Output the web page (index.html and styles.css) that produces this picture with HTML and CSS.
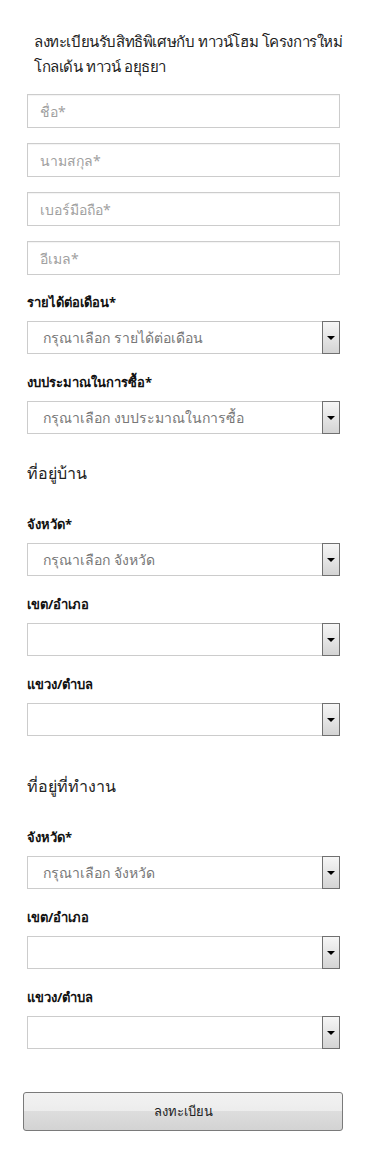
FILE: index.html
```html
<!DOCTYPE html>
<html lang="th">
  <head>
    <meta charset="UTF-8" />
    <title>ลงทะเบียน</title>
    <link rel="stylesheet" href="styles.css">
  </head>
  <body>
    <div class="container">
      <h1 class="title">ลงทะเบียนรับสิทธิพิเศษกับ ทาวน์โฮม โครงการใหม่ โกลเด้น ทาวน์ อยุธยา</h1>
      <form class="register">
        <input type="text" class="input" placeholder="ชื่อ*" />
        <input type="text" class="input" placeholder="นามสกุล*" />
        <input type="text" class="input" placeholder="เบอร์มือถือ*" />
        <input type="text" class="input" placeholder="อีเมล*" />

        <label class="label first">รายได้ต่อเดือน*</label>
        <div class="select">
          <span class="select-text">กรุณาเลือก รายได้ต่อเดือน</span>
          <span class="arrow"></span>
        </div>

        <label class="label">งบประมาณในการซื้อ*</label>
        <div class="select">
          <span class="select-text">กรุณาเลือก งบประมาณในการซื้อ</span>
          <span class="arrow"></span>
        </div>

        <h3 class="section">ที่อยู่บ้าน</h3>
        <label class="label top">จังหวัด*</label>
        <div class="select">
          <span class="select-text">กรุณาเลือก จังหวัด</span>
          <span class="arrow"></span>
        </div>
        <label class="label">เขต/อำเภอ</label>
        <div class="select">
          <span class="select-text"></span>
          <span class="arrow"></span>
        </div>
        <label class="label">แขวง/ตำบล</label>
        <div class="select">
          <span class="select-text"></span>
          <span class="arrow"></span>
        </div>

        <h3 class="section second">ที่อยู่ที่ทำงาน</h3>
        <label class="label top">จังหวัด*</label>
        <div class="select">
          <span class="select-text">กรุณาเลือก จังหวัด</span>
          <span class="arrow"></span>
        </div>
        <label class="label">เขต/อำเภอ</label>
        <div class="select">
          <span class="select-text"></span>
          <span class="arrow"></span>
        </div>
        <label class="label">แขวง/ตำบล</label>
        <div class="select">
          <span class="select-text"></span>
          <span class="arrow"></span>
        </div>

        <button type="button" class="submit">ลงทะเบียน</button>
      </form>
    </div>
  </body>
</html>
```

FILE: styles.css
```css
* {
  box-sizing: border-box;
  margin: 0;
  padding: 0;
}

body {
  font-family: Tahoma, "Noto Sans", sans-serif;
  background-color: #fff;
  color: #222;
}

.container {
  padding: 29px 30px 0 27px;
}

.title {
  font-size: 15px;
  font-weight: normal;
  line-height: 25px;
  letter-spacing: -0.4px;
  color: #222;
  padding-left: 7px;
  margin-right: -4px;
  margin-bottom: 15px;
}

.register {
  display: flex;
  flex-direction: column;
}

.input {
  height: 34px;
  border: 1px solid #ccc;
  padding: 0 12px;
  font-family: Tahoma, "Noto Sans", sans-serif;
  font-size: 14px;
  margin-bottom: 15px;
  box-shadow: inset 0 1px 1px rgba(0, 0, 0, 0.05);
}

.input::placeholder {
  color: #a0a0a0;
}

.label {
  font-size: 13px;
  font-weight: bold;
  line-height: 20px;
  color: #111;
  margin: 18px 0 9px;
}

.label.first {
  margin-top: 2px;
}

.label.top {
  margin-top: 29px;
}

.select {
  display: flex;
  height: 33px;
  border: 1px solid #ccc;
}

.select-text {
  flex: 1;
  padding: 0 15px;
  font-size: 14px;
  line-height: 31px;
  color: #777;
}

.arrow {
  width: 18px;
  margin: -1px -1px -1px 0;
  border: 1px solid #707070;
  background: linear-gradient(#f6f6f6, #d4d4d4);
  display: flex;
  align-items: center;
  justify-content: center;
}

.arrow::after {
  content: "";
  border-left: 4px solid transparent;
  border-right: 4px solid transparent;
  border-top: 4px solid #000;
}

.section {
  font-size: 16px;
  font-weight: normal;
  line-height: 24px;
  color: #222;
  margin-top: 27px;
}

.section.second {
  margin-top: 38px;
}

.submit {
  margin: 43px -3px 0 -4px;
  height: 39px;
  border: 1px solid #7a7a7a;
  border-radius: 3px;
  background: linear-gradient(#f2f2f2 0%, #ececec 50%, #dddddd 50%, #d3d3d3 100%);
  font-family: Tahoma, "Noto Sans", sans-serif;
  font-size: 13px;
  color: #222;
  cursor: pointer;
}
```
